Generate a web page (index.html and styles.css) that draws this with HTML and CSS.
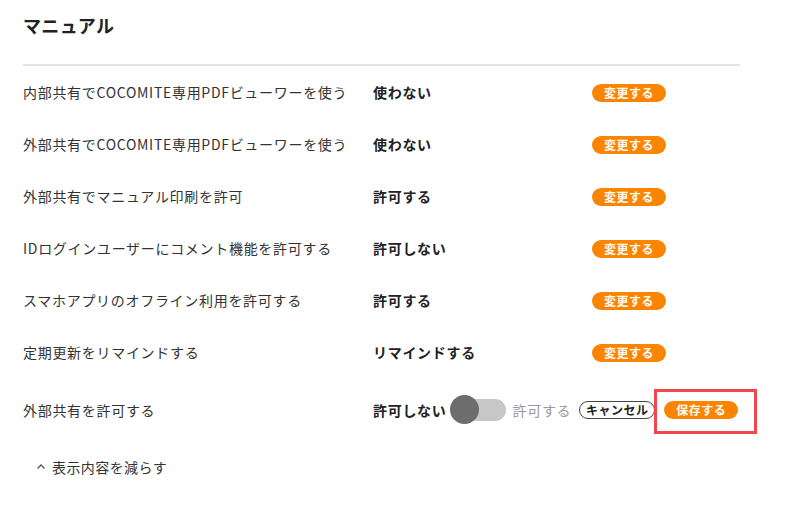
FILE: index.html
```html
<!DOCTYPE html>
<html lang="ja">
<head>
<meta charset="utf-8">
<link rel="stylesheet" href="styles.css">
</head>
<body>
<div class="page">
  <h1 class="title">マニュアル</h1>
  <div class="settings">
    <div class="row">
      <div class="label">内部共有でCOCOMITE専用PDFビューワーを使う</div>
      <div class="value">使わない</div>
      <div class="action"><button class="btn-orange">変更する</button></div>
    </div>
    <div class="row">
      <div class="label">外部共有でCOCOMITE専用PDFビューワーを使う</div>
      <div class="value">使わない</div>
      <div class="action"><button class="btn-orange">変更する</button></div>
    </div>
    <div class="row">
      <div class="label">外部共有でマニュアル印刷を許可</div>
      <div class="value">許可する</div>
      <div class="action"><button class="btn-orange">変更する</button></div>
    </div>
    <div class="row">
      <div class="label">IDログインユーザーにコメント機能を許可する</div>
      <div class="value">許可しない</div>
      <div class="action"><button class="btn-orange">変更する</button></div>
    </div>
    <div class="row">
      <div class="label">スマホアプリのオフライン利用を許可する</div>
      <div class="value">許可する</div>
      <div class="action"><button class="btn-orange">変更する</button></div>
    </div>
    <div class="row">
      <div class="label">定期更新をリマインドする</div>
      <div class="value">リマインドする</div>
      <div class="action"><button class="btn-orange">変更する</button></div>
    </div>
    <div class="row row-edit">
      <div class="label">外部共有を許可する</div>
      <div class="edit">
        <span class="value">許可しない</span>
        <span class="toggle"><span class="knob"></span></span>
        <span class="off-text">許可する</span>
        <button class="btn-outline">キャンセル</button>
        <span class="highlight"><button class="btn-orange">保存する</button></span>
      </div>
    </div>
  </div>
  <div class="less">
    <svg class="chev" width="10" height="7" viewBox="0 0 10 7"><path d="M1.5 5.5 L5 2 L8.5 5.5" fill="none" stroke="#555" stroke-width="1.3"/></svg>
    <span>表示内容を減らす</span>
  </div>
</div>
</body>
</html>
```
FILE: styles.css
```css
* { box-sizing: border-box; }
body {
  margin: 0;
  background: #fff;
  font-family: "Noto Sans CJK JP", "Noto Sans", sans-serif;
  color: #333;
}
.page {
  padding: 12px 0 0 23px;
  width: 740px;
}
.title {
  margin: 0;
  font-size: 18px;
  font-weight: bold;
  line-height: 26px;
  letter-spacing: 0.02em;
  color: #222;
  padding-bottom: 26px;
  border-bottom: 2px solid #e2e2e2;
}
.settings {
  display: flex;
  flex-direction: column;
}
.row {
  display: grid;
  grid-template-columns: 350px 219px auto;
  align-items: center;
  height: 52px;
  font-size: 14px;
  letter-spacing: 0.05em;
}
.row-edit {
  grid-template-columns: 350px auto;
  height: 64px;
}
.label { color: #333; }
.value { font-weight: bold; color: #222; }
.btn-orange {
  font-family: inherit;
  font-size: 12px;
  font-weight: bold;
  color: #fff;
  background: #fb8500;
  border: none;
  border-radius: 10px;
  height: 18px;
  width: 74px;
  padding: 0;
  line-height: 18px;
  letter-spacing: 0.04em;
}
.edit {
  display: flex;
  align-items: center;
}
.toggle {
  position: relative;
  width: 56px;
  height: 24px;
  margin-left: 3px;
  display: flex;
  align-items: center;
}
.toggle::before {
  content: "";
  display: block;
  width: 40px;
  height: 22px;
  margin-left: 16px;
  border-radius: 11px;
  background: #c7c7c7;
}
.knob {
  position: absolute;
  left: 0;
  top: -3px;
  width: 29px;
  height: 29px;
  border-radius: 50%;
  background: #6d6d6d;
}
.off-text {
  color: #9a9a9a;
  margin-left: 7px;
}
.btn-outline {
  font-family: inherit;
  font-size: 12px;
  font-weight: bold;
  color: #222;
  background: #fff;
  border: 1px solid #444;
  border-radius: 10px;
  height: 18px;
  width: 76px;
  padding: 0;
  line-height: 16px;
  margin-left: 8px;
  letter-spacing: 0.04em;
}
.highlight {
  position: relative;
  display: inline-flex;
  margin-left: 9px;
}
.highlight::after {
  content: "";
  position: absolute;
  left: -10px;
  right: -19px;
  top: -12px;
  bottom: -15px;
  border: 3px solid #f2474d;
}
.less {
  display: flex;
  align-items: center;
  height: 26px;
  margin-top: 12px;
  padding-left: 13px;
  font-size: 14px;
  letter-spacing: 0.03em;
  color: #333;
}
.chev { margin-right: 6px; margin-top: -2px; }
```
